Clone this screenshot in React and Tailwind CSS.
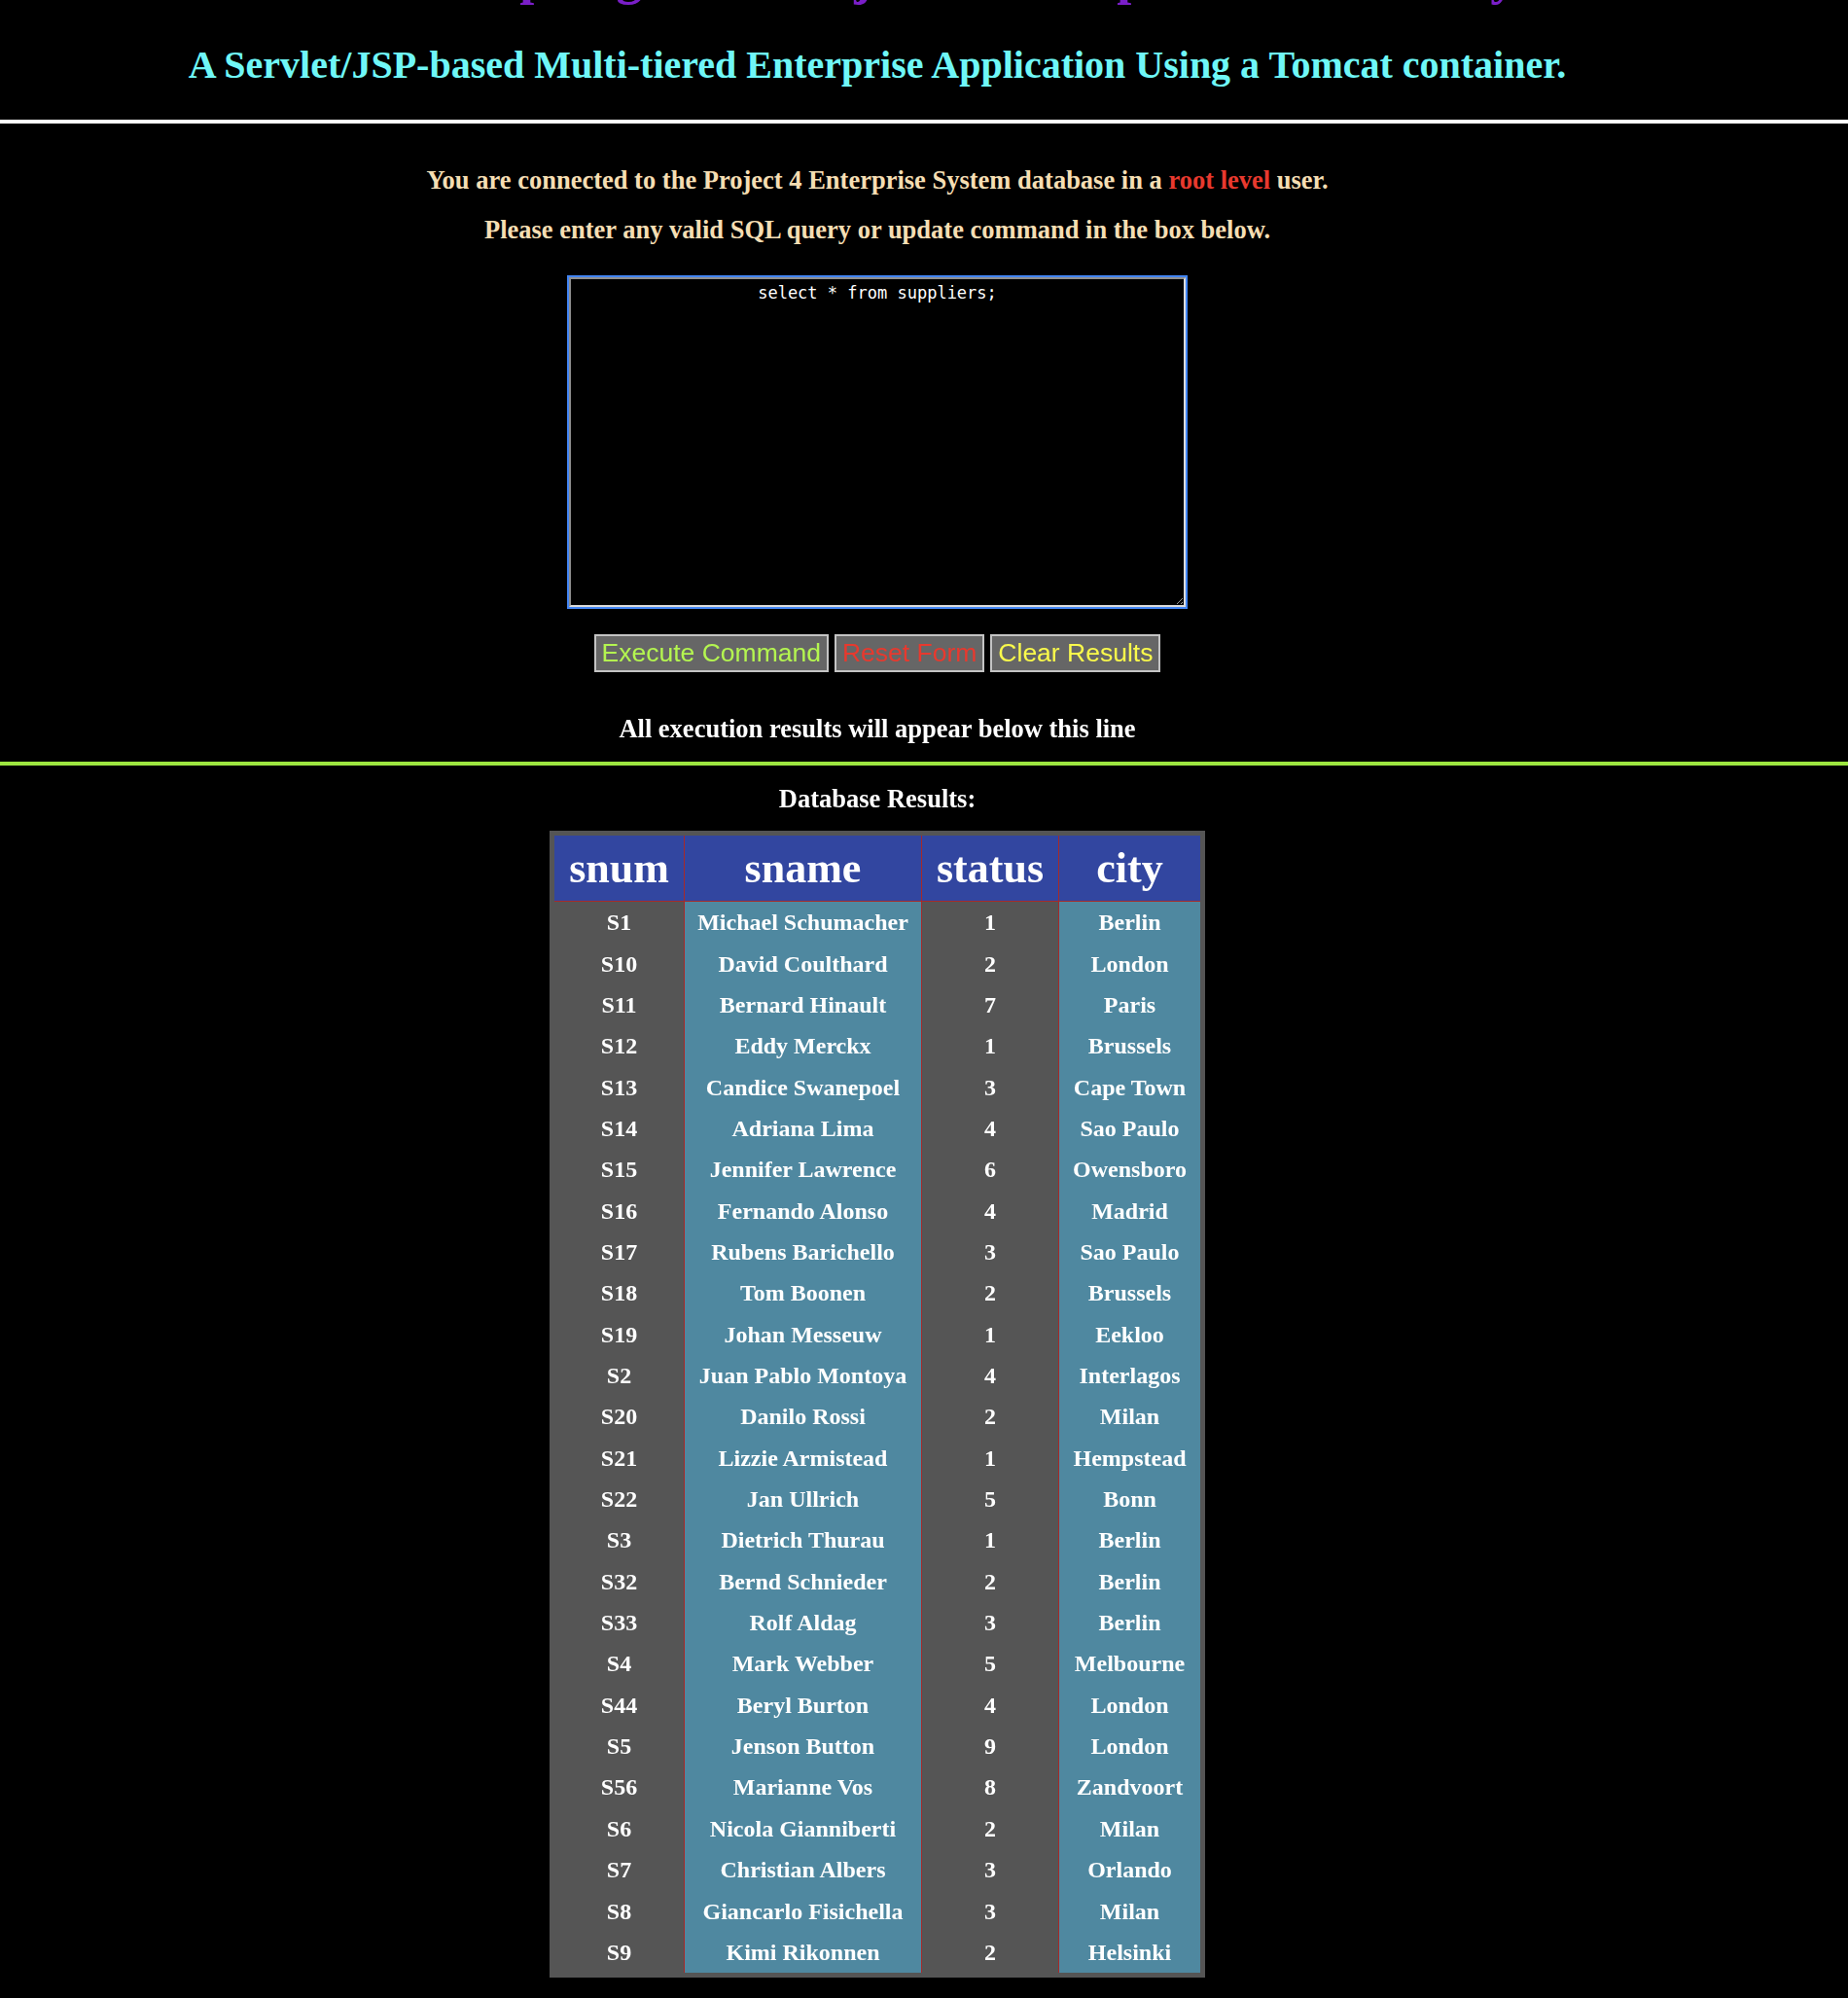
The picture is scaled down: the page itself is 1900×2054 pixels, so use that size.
import React from 'react';

const rows = [
  ['S1', 'Michael Schumacher', '1', 'Berlin'],
  ['S10', 'David Coulthard', '2', 'London'],
  ['S11', 'Bernard Hinault', '7', 'Paris'],
  ['S12', 'Eddy Merckx', '1', 'Brussels'],
  ['S13', 'Candice Swanepoel', '3', 'Cape Town'],
  ['S14', 'Adriana Lima', '4', 'Sao Paulo'],
  ['S15', 'Jennifer Lawrence', '6', 'Owensboro'],
  ['S16', 'Fernando Alonso', '4', 'Madrid'],
  ['S17', 'Rubens Barichello', '3', 'Sao Paulo'],
  ['S18', 'Tom Boonen', '2', 'Brussels'],
  ['S19', 'Johan Messeuw', '1', 'Eekloo'],
  ['S2', 'Juan Pablo Montoya', '4', 'Interlagos'],
  ['S20', 'Danilo Rossi', '2', 'Milan'],
  ['S21', 'Lizzie Armistead', '1', 'Hempstead'],
  ['S22', 'Jan Ullrich', '5', 'Bonn'],
  ['S3', 'Dietrich Thurau', '1', 'Berlin'],
  ['S32', 'Bernd Schnieder', '2', 'Berlin'],
  ['S33', 'Rolf Aldag', '3', 'Berlin'],
  ['S4', 'Mark Webber', '5', 'Melbourne'],
  ['S44', 'Beryl Burton', '4', 'London'],
  ['S5', 'Jenson Button', '9', 'London'],
  ['S56', 'Marianne Vos', '8', 'Zandvoort'],
  ['S6', 'Nicola Gianniberti', '2', 'Milan'],
  ['S7', 'Christian Albers', '3', 'Orlando'],
  ['S8', 'Giancarlo Fisichella', '3', 'Milan'],
  ['S9', 'Kimi Rikonnen', '2', 'Helsinki'],
];

const th = 'bg-[#3246a0] border-b border-[#a52a2a] py-[8px] text-[44px] leading-[51.3px] font-bold';
const td = 'py-[7px] text-[24px] leading-[28.35px] font-bold text-center';

const App = () => {
  return (
    <div className="min-h-screen bg-black flex flex-col font-['Liberation_Serif','Times_New_Roman',serif] font-bold">
      <div className="w-[1804px] text-center">
        <h1 className="-mt-[56px] text-[54px] leading-[62px] text-[#7a1ec8]">
          Welcome to the Spring 2024 Project 4 Enterprise Database System
        </h1>
        <h2 className="mt-[37.5px] text-[40px] leading-[46px] text-[#6ff7f7]">
          A Servlet/JSP-based Multi-tiered Enterprise Application Using a Tomcat container.
        </h2>
      </div>

      <div className="mt-[33.5px] h-[4px] bg-white" />

      <div className="w-[1804px] flex flex-col items-center text-[26.5px] leading-[31px]">
        <p className="mt-[42.6px] text-[#f5deb3]">
          You are connected to the Project 4 Enterprise System database in a{' '}
          <span className="text-[#e8392e]">root level</span> user.
        </p>
        <p className="mt-[20px] text-[#f5deb3]">
          Please enter any valid SQL query or update command in the box below.
        </p>
        <textarea
          autoFocus
          defaultValue="select * from suppliers;"
          className="mt-[33.4px] w-[634px] h-[339px] bg-black text-white caret-white text-center font-['DejaVu_Sans_Mono','Liberation_Mono',monospace] font-normal text-[17px] leading-[20px] px-[2px] pt-[4px] border-2 border-t-[#8e8e8e] border-l-[#8e8e8e] border-b-[#dcdcdc] border-r-[#dcdcdc] outline-2 outline-[#4285f4]"
        />
        <div className="mt-[28px] flex gap-[6px] font-['Liberation_Sans',Arial,sans-serif] font-normal">
          <button className="h-[39px] px-[6px] bg-[#666] border-2 border-[#c4c4c4] text-[26.5px] leading-[31px] text-[#b4f550]">
            Execute Command
          </button>
          <button className="h-[39px] px-[6px] bg-[#666] border-2 border-[#c4c4c4] text-[26.5px] leading-[31px] text-[#e8392e]">
            Reset Form
          </button>
          <button className="h-[39px] px-[6px] bg-[#666] border-2 border-[#c4c4c4] text-[26.5px] leading-[31px] text-[#fafa4b]">
            Clear Results
          </button>
        </div>
        <p className="mt-[42.6px] text-white">All execution results will appear below this line</p>
      </div>

      <div className="mt-[18.4px] h-[4px] bg-[#9de640]" />

      <div className="w-[1804px] flex flex-col items-center">
        <p className="mt-[18.6px] text-[26.5px] leading-[31px] text-white">Database Results:</p>
        <table className="mt-[17.4px] mb-[20px] table-fixed w-[674px] border-separate border-spacing-0 border-[5px] border-[#555] bg-[#555] text-white">
          <thead>
            <tr>
              <th className={`w-[134px] border-r ${th}`}>snum</th>
              <th className={`w-[244px] border-r ${th}`}>sname</th>
              <th className={`w-[141px] border-r ${th}`}>status</th>
              <th className={`w-[145px] ${th}`}>city</th>
            </tr>
          </thead>
          <tbody>
            {rows.map((r) => (
              <tr key={r[0]}>
                <td className={`border-r border-[#a52a2a] ${td}`}>{r[0]}</td>
                <td className={`border-r border-[#a52a2a] bg-[#4f88a0] ${td}`}>{r[1]}</td>
                <td className={`border-r border-[#a52a2a] ${td}`}>{r[2]}</td>
                <td className={`bg-[#4f88a0] ${td}`}>{r[3]}</td>
              </tr>
            ))}
          </tbody>
        </table>
      </div>
    </div>
  );
};

export default App;
